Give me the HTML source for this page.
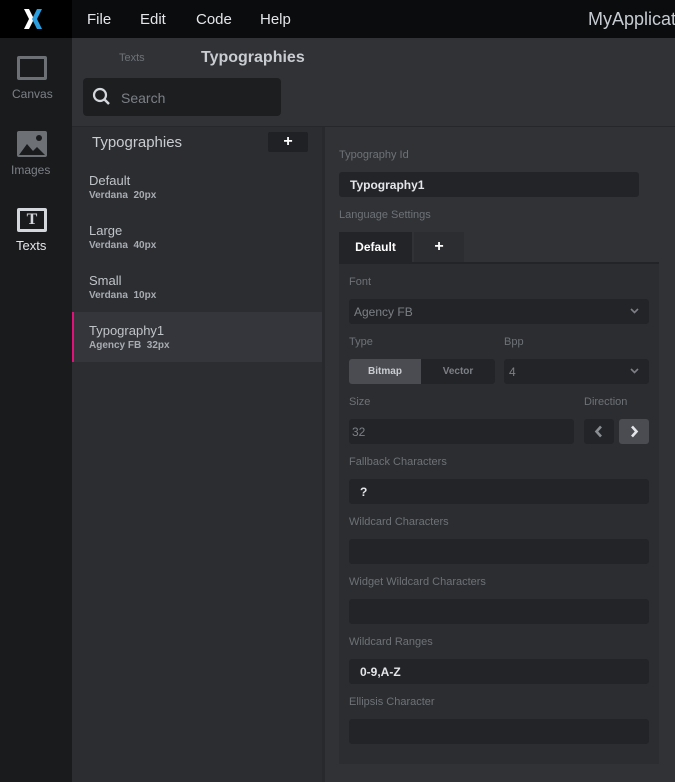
<!DOCTYPE html>
<html><head><meta charset="utf-8"><style>
*{margin:0;padding:0;box-sizing:border-box}
body{width:675px;height:782px;overflow:hidden;background:#303236;font-family:"Liberation Sans",sans-serif;position:relative;color:#c9ccd1}
.a{position:absolute}
.lbl{position:absolute;font-size:11px;color:#6e7277}
.inp{position:absolute;background:#232427;border-radius:3px;height:25px;font-size:12px}
.chev{position:absolute;right:10px;top:9px}
</style></head><body>
<div class="a" style="left:0;top:0;width:675px;height:38px;background:#0a0c0d"></div>
<div class="a" style="left:0;top:0;width:72px;height:38px;background:#000"></div>
<svg class="a" style="left:22px;top:8px" width="22" height="22" viewBox="0 0 22 22"><path d="M2 1h5l5 10-5 10H2l5-10z" fill="#fff"/><path d="M15 1h5l-5 10 5 10h-5l-5-10z" fill="#2b9fe0"/></svg>
<div class="a" style="left:87px;top:11px;font-size:15px;color:#e4e6ea">File</div>
<div class="a" style="left:140px;top:11px;font-size:15px;color:#e4e6ea">Edit</div>
<div class="a" style="left:196px;top:11px;font-size:15px;color:#e4e6ea">Code</div>
<div class="a" style="left:260px;top:11px;font-size:15px;color:#e4e6ea">Help</div>
<div class="a" style="left:588px;top:9px;font-size:18px;color:#c7ccd3;white-space:nowrap">MyApplication</div>
<div class="a" style="left:0;top:38px;width:72px;height:744px;background:#1a1b1d"></div>
<div class="a" style="left:17px;top:56px;width:30px;height:24px;border:3px solid #6d7176;border-radius:2px"></div>
<div class="a" style="left:12px;top:87px;font-size:12px;color:#7c8086">Canvas</div>
<svg class="a" style="left:17px;top:131px" width="30" height="26" viewBox="0 0 30 26"><rect width="30" height="26" rx="2" fill="#6d7176"/><path d="M2 24L10 13l6 7 4-4 8 8z" fill="#1a1b1d"/><circle cx="22" cy="7" r="3" fill="#1a1b1d"/></svg>
<div class="a" style="left:11px;top:163px;font-size:12px;color:#7c8086">Images</div>
<div class="a" style="left:17px;top:208px;width:30px;height:24px;border:3px solid #d4d7db;border-radius:2px;font-family:'Liberation Serif',serif;font-weight:bold;font-size:16px;color:#d4d7db;text-align:center;line-height:18px">T</div>
<div class="a" style="left:16px;top:238px;font-size:13px;color:#e4e6ea">Texts</div>
<div class="a" style="left:119px;top:52px;font-size:11px;color:#6e7277">Texts</div>
<div class="a" style="left:201px;top:49px;font-size:16px;font-weight:bold;color:#c9ccd1">Typographies</div>
<div class="a" style="left:83px;top:78px;width:198px;height:38px;background:#1d1e20;border-radius:4px"></div>
<svg class="a" style="left:92px;top:87px" width="20" height="20" viewBox="0 0 20 20"><circle cx="8" cy="8" r="6" stroke="#d4d7db" stroke-width="2.2" fill="none"/><path d="M12.5 12.5L17 17" stroke="#d4d7db" stroke-width="2.5"/></svg>
<div class="a" style="left:121px;top:90px;font-size:14px;color:#7c8086">Search</div>
<div class="a" style="left:72px;top:126px;width:603px;height:1px;background:#25272a"></div>
<div class="a" style="left:72px;top:127px;width:252px;height:655px;background:#2b2d31"></div>
<div class="a" style="left:322px;top:127px;width:3px;height:655px;background:#28292c"></div>
<div class="a" style="left:92px;top:134px;font-size:15px;color:#c9ccd1">Typographies</div>
<div class="a" style="left:268px;top:132px;width:40px;height:20px;background:#202124;border-radius:2px;color:#fff;font-size:16px;font-weight:bold;text-align:center;line-height:20px">+</div>
<div class="a" style="left:89px;top:173px;font-size:13px;color:#c0c3c8">Default</div>
<div class="a" style="left:89px;top:190px;font-size:10px;font-weight:bold;color:#a8acb2">Verdana&nbsp; 20px</div>
<div class="a" style="left:89px;top:223px;font-size:13px;color:#c0c3c8">Large</div>
<div class="a" style="left:89px;top:240px;font-size:10px;font-weight:bold;color:#a8acb2">Verdana&nbsp; 40px</div>
<div class="a" style="left:89px;top:273px;font-size:13px;color:#c0c3c8">Small</div>
<div class="a" style="left:89px;top:290px;font-size:10px;font-weight:bold;color:#a8acb2">Verdana&nbsp; 10px</div>
<div class="a" style="left:72px;top:312px;width:250px;height:50px;background:#34363b;border-left:2px solid #e0127a"></div>
<div class="a" style="left:89px;top:323px;font-size:13px;color:#c0c3c8">Typography1</div>
<div class="a" style="left:89px;top:340px;font-size:10px;font-weight:bold;color:#a8acb2">Agency FB&nbsp; 32px</div>
<div class="lbl" style="left:339px;top:149px">Typography Id</div>
<div class="inp" style="left:339px;top:172px;width:300px;color:#e4e6ea;font-weight:bold;padding:6px 11px">Typography1</div>
<div class="lbl" style="left:339px;top:209px">Language Settings</div>
<div class="a" style="left:339px;top:232px;width:73px;height:30px;background:#232427;color:#fff;font-size:12px;font-weight:bold;text-align:center;line-height:30px">Default</div>
<div class="a" style="left:414px;top:232px;width:50px;height:30px;background:#2b2d31;color:#fff;font-size:16px;font-weight:bold;text-align:center;line-height:30px">+</div>
<div class="a" style="left:339px;top:262px;width:320px;height:2px;background:#232427"></div>
<div class="a" style="left:339px;top:264px;width:320px;height:500px;background:#2b2d30"></div>
<div class="lbl" style="left:349px;top:276px">Font</div>
<div class="inp" style="left:349px;top:299px;width:300px;color:#7c8086;padding:6px 5px">Agency FB<svg class="chev" width="9" height="6" viewBox="0 0 9 6"><path d="M1 1l3.5 3.5L8 1" stroke="#7c8086" stroke-width="1.6" fill="none"/></svg></div>
<div class="lbl" style="left:349px;top:336px">Type</div>
<div class="lbl" style="left:504px;top:336px">Bpp</div>
<div class="a" style="left:349px;top:359px;width:72px;height:25px;background:#4a4c52;border-radius:3px 0 0 3px;font-size:10px;font-weight:bold;color:#c9ccd1;text-align:center;line-height:25px">Bitmap</div>
<div class="a" style="left:421px;top:359px;width:74px;height:25px;background:#232427;border-radius:0 3px 3px 0;font-size:10px;font-weight:bold;color:#7c8086;text-align:center;line-height:25px">Vector</div>
<div class="inp" style="left:504px;top:359px;width:145px;color:#7c8086;padding:6px 5px">4<svg class="chev" width="9" height="6" viewBox="0 0 9 6"><path d="M1 1l3.5 3.5L8 1" stroke="#7c8086" stroke-width="1.6" fill="none"/></svg></div>
<div class="lbl" style="left:349px;top:396px">Size</div>
<div class="lbl" style="left:584px;top:396px">Direction</div>
<div class="inp" style="left:349px;top:419px;width:225px;color:#7c8086;padding:6px 3px">32</div>
<div class="a" style="left:584px;top:419px;width:30px;height:25px;background:#232427;border-radius:3px"><svg style="position:absolute;left:10px;top:6px" width="9" height="13" viewBox="0 0 9 13"><path d="M7 1.5L2.5 6.5 7 11.5" stroke="#8a8e93" stroke-width="2.6" fill="none"/></svg></div>
<div class="a" style="left:619px;top:419px;width:30px;height:25px;background:#4a4c52;border-radius:3px"><svg style="position:absolute;left:11px;top:6px" width="9" height="13" viewBox="0 0 9 13"><path d="M2 1.5L6.5 6.5 2 11.5" stroke="#e4e6ea" stroke-width="2.6" fill="none"/></svg></div>
<div class="lbl" style="left:349px;top:456px">Fallback Characters</div>
<div class="inp" style="left:349px;top:479px;width:300px;color:#e4e6ea;font-weight:bold;padding:6px 11px">?</div>
<div class="lbl" style="left:349px;top:516px">Wildcard Characters</div>
<div class="inp" style="left:349px;top:539px;width:300px"></div>
<div class="lbl" style="left:349px;top:576px">Widget Wildcard Characters</div>
<div class="inp" style="left:349px;top:599px;width:300px"></div>
<div class="lbl" style="left:349px;top:636px">Wildcard Ranges</div>
<div class="inp" style="left:349px;top:659px;width:300px;color:#e4e6ea;font-weight:bold;padding:6px 11px">0-9,A-Z</div>
<div class="lbl" style="left:349px;top:696px">Ellipsis Character</div>
<div class="inp" style="left:349px;top:719px;width:300px"></div>
</body></html>
